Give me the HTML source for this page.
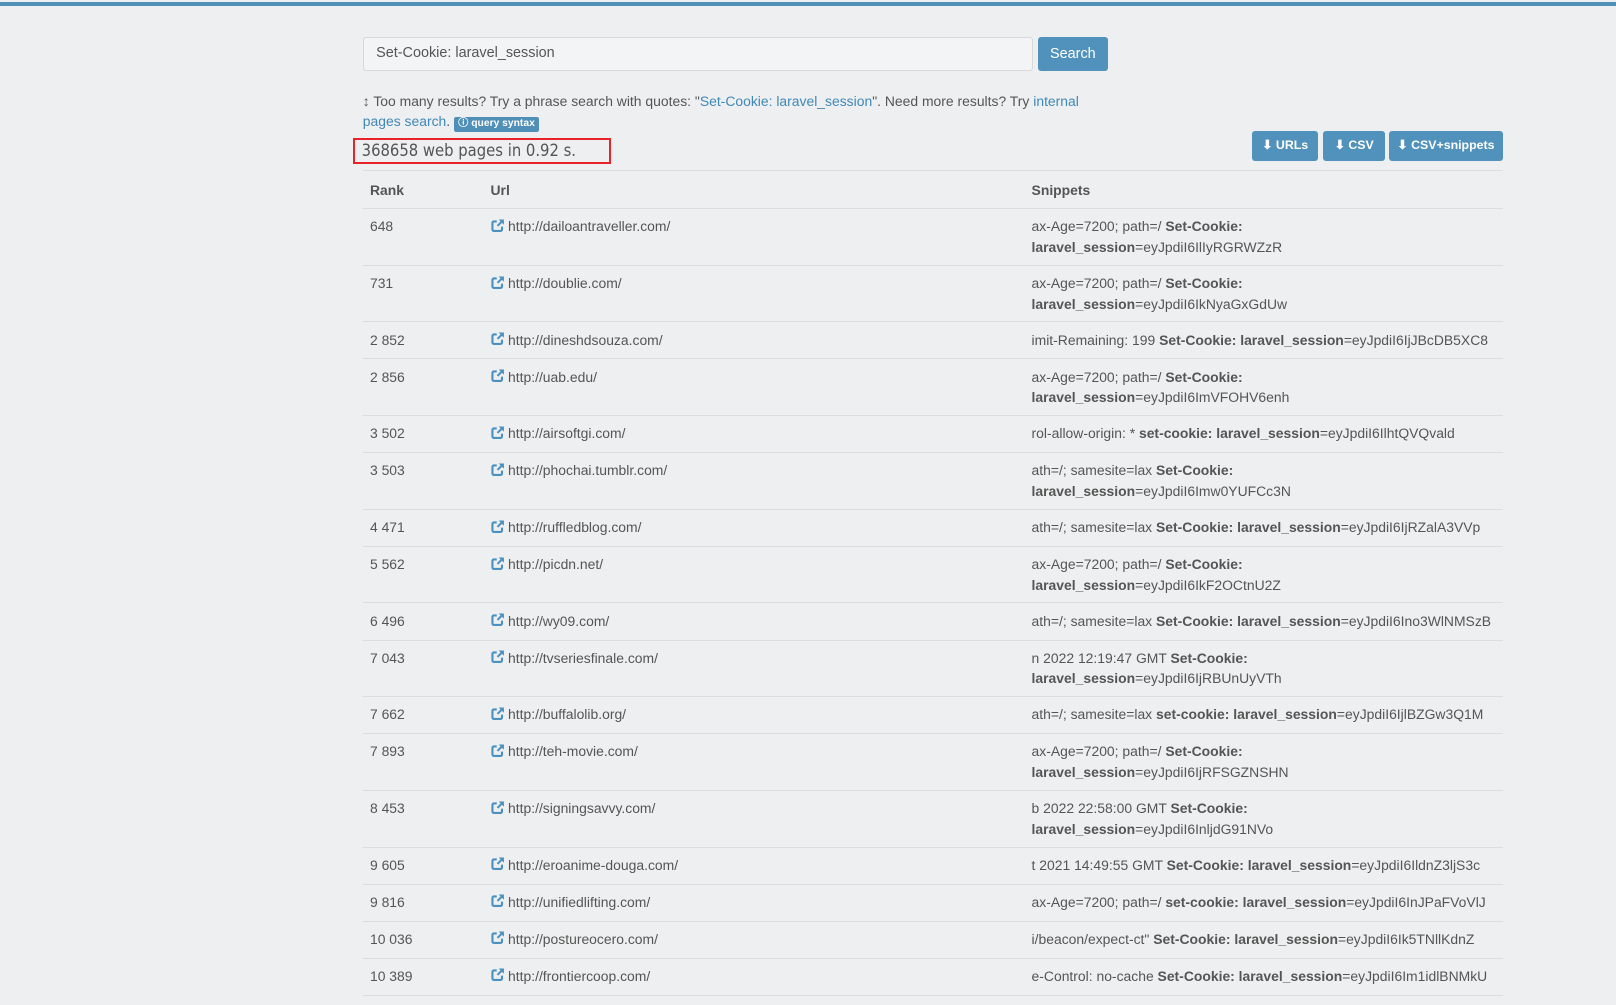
<!DOCTYPE html>
<html><head><meta charset="utf-8"><style>
body{margin:0;background:#eeeff0;font-family:"Liberation Sans",sans-serif;color:#555;font-size:13.5px;width:1616px;height:1005px;overflow:hidden;position:relative}
.w{zoom:1.0306;position:absolute;left:0;top:0;width:1568px;height:975px}
.bar{position:absolute;top:2px;left:0;width:1568px;height:4px;background:#4f8fb8}
.inp{position:absolute;left:352px;top:36px;width:636px;height:31px;border:1px solid #d8d8d8;border-radius:3px;background:#f3f4f5;line-height:31px;padding-left:12px;font-size:14px;color:#555}
.btn{position:absolute;background:#5092bb;color:#fff;border-radius:3px;text-align:center}
.info{position:absolute;left:352px;top:88px;width:720px;line-height:20px;font-size:13.5px}
a{color:#3f88b8;text-decoration:none}
.qs{display:inline-block;background:#4f8fb8;color:#fff;font-size:10px;font-weight:bold;padding:0 4px;line-height:14px;border-radius:2px}
.cnt{position:absolute;left:343px;top:134px;width:240px;height:21px;border:2px solid #e8222a;font-family:"DejaVu Sans Condensed","DejaVu Sans",sans-serif;font-size:16px;line-height:21px;padding-left:6px;color:#555}
table{position:absolute;left:352px;top:165px;width:1106px;border-collapse:collapse}
th{text-align:left;font-weight:bold;height:36px;padding:0 7px;border-top:1px solid #ddd;border-bottom:1px solid #ddd;font-size:13.5px}
td{vertical-align:top;padding:7px 7px 0;border-bottom:1px solid #ddd;line-height:20px;font-size:13.5px}
tr.s td{height:28px}tr.d td{height:47px}
svg.ic{width:13px;height:13px;margin-right:4px;vertical-align:-1px}
</style></head><body>
<svg width="0" height="0" style="position:absolute"><defs><symbol id="e" viewBox="0 0 14 14"><path d="M6 2.5H3A1.5 1.5 0 0 0 1.5 4v7A1.5 1.5 0 0 0 3 12.5h7A1.5 1.5 0 0 0 11.5 11V8" fill="none" stroke="#4a90c0" stroke-width="2.2"/><path d="M8 0.5h5.5V6L11.5 4 7.5 8 6 6.5l4-4z" fill="#4a90c0"/></symbol></defs></svg>
<div class="w">
<div class="bar"></div>
<div class="inp">Set-Cookie: laravel_session</div>
<div class="btn" style="left:1007px;top:36px;width:68px;height:33px;line-height:33px;font-size:14px">Search</div>
<div class="info">↕ Too many results? Try a phrase search with quotes: "<a>Set-Cookie: laravel_session</a>". Need more results? Try <a>internal pages search</a>. <span class="qs">ⓘ query syntax</span></div>
<div class="cnt">368658 web pages in 0.92 s.</div>
<div class="btn" style="left:1215px;top:127px;width:64px;height:29px;line-height:29px;font-size:12px;font-weight:bold">⬇ URLs</div>
<div class="btn" style="left:1284px;top:127px;width:60px;height:29px;line-height:29px;font-size:12px;font-weight:bold">⬇ CSV</div>
<div class="btn" style="left:1348px;top:127px;width:110px;height:29px;line-height:29px;font-size:12px;font-weight:bold">⬇ CSV+snippets</div>
<table>
<tr><th style="width:103px">Rank</th><th style="width:511px">Url</th><th>Snippets</th></tr>
<tr class="d"><td>648</td><td><svg class="ic"><use href="#e"/></svg>http://dailoantraveller.com/</td><td>ax-Age=7200; path=/ <b>Set-Cookie:<br>laravel_session</b>=eyJpdiI6IlIyRGRWZzR</td></tr>
<tr class="d"><td>731</td><td><svg class="ic"><use href="#e"/></svg>http://doublie.com/</td><td>ax-Age=7200; path=/ <b>Set-Cookie:<br>laravel_session</b>=eyJpdiI6IkNyaGxGdUw</td></tr>
<tr class="s"><td>2 852</td><td><svg class="ic"><use href="#e"/></svg>http://dineshdsouza.com/</td><td>imit-Remaining: 199 <b>Set-Cookie: laravel_session</b>=eyJpdiI6IjJBcDB5XC8</td></tr>
<tr class="d"><td>2 856</td><td><svg class="ic"><use href="#e"/></svg>http://uab.edu/</td><td>ax-Age=7200; path=/ <b>Set-Cookie:<br>laravel_session</b>=eyJpdiI6ImVFOHV6enh</td></tr>
<tr class="s"><td>3 502</td><td><svg class="ic"><use href="#e"/></svg>http://airsoftgi.com/</td><td>rol-allow-origin: * <b>set-cookie: laravel_session</b>=eyJpdiI6IlhtQVQvald</td></tr>
<tr class="d"><td>3 503</td><td><svg class="ic"><use href="#e"/></svg>http://phochai.tumblr.com/</td><td>ath=/; samesite=lax <b>Set-Cookie:<br>laravel_session</b>=eyJpdiI6Imw0YUFCc3N</td></tr>
<tr class="s"><td>4 471</td><td><svg class="ic"><use href="#e"/></svg>http://ruffledblog.com/</td><td>ath=/; samesite=lax <b>Set-Cookie: laravel_session</b>=eyJpdiI6IjRZalA3VVp</td></tr>
<tr class="d"><td>5 562</td><td><svg class="ic"><use href="#e"/></svg>http://picdn.net/</td><td>ax-Age=7200; path=/ <b>Set-Cookie:<br>laravel_session</b>=eyJpdiI6IkF2OCtnU2Z</td></tr>
<tr class="s"><td>6 496</td><td><svg class="ic"><use href="#e"/></svg>http://wy09.com/</td><td>ath=/; samesite=lax <b>Set-Cookie: laravel_session</b>=eyJpdiI6Ino3WlNMSzB</td></tr>
<tr class="d"><td>7 043</td><td><svg class="ic"><use href="#e"/></svg>http://tvseriesfinale.com/</td><td>n 2022 12:19:47 GMT <b>Set-Cookie:<br>laravel_session</b>=eyJpdiI6IjRBUnUyVTh</td></tr>
<tr class="s"><td>7 662</td><td><svg class="ic"><use href="#e"/></svg>http://buffalolib.org/</td><td>ath=/; samesite=lax <b>set-cookie: laravel_session</b>=eyJpdiI6IjlBZGw3Q1M</td></tr>
<tr class="d"><td>7 893</td><td><svg class="ic"><use href="#e"/></svg>http://teh-movie.com/</td><td>ax-Age=7200; path=/ <b>Set-Cookie:<br>laravel_session</b>=eyJpdiI6IjRFSGZNSHN</td></tr>
<tr class="d"><td>8 453</td><td><svg class="ic"><use href="#e"/></svg>http://signingsavvy.com/</td><td>b 2022 22:58:00 GMT <b>Set-Cookie:<br>laravel_session</b>=eyJpdiI6InljdG91NVo</td></tr>
<tr class="s"><td>9 605</td><td><svg class="ic"><use href="#e"/></svg>http://eroanime-douga.com/</td><td>t 2021 14:49:55 GMT <b>Set-Cookie: laravel_session</b>=eyJpdiI6IldnZ3ljS3c</td></tr>
<tr class="s"><td>9 816</td><td><svg class="ic"><use href="#e"/></svg>http://unifiedlifting.com/</td><td>ax-Age=7200; path=/ <b>set-cookie: laravel_session</b>=eyJpdiI6InJPaFVoVlJ</td></tr>
<tr class="s"><td>10 036</td><td><svg class="ic"><use href="#e"/></svg>http://postureocero.com/</td><td>i/beacon/expect-ct" <b>Set-Cookie: laravel_session</b>=eyJpdiI6Ik5TNllKdnZ</td></tr>
<tr class="s"><td>10 389</td><td><svg class="ic"><use href="#e"/></svg>http://frontiercoop.com/</td><td>e-Control: no-cache <b>Set-Cookie: laravel_session</b>=eyJpdiI6Im1idlBNMkU</td></tr>
</table>
</div>
</body></html>
